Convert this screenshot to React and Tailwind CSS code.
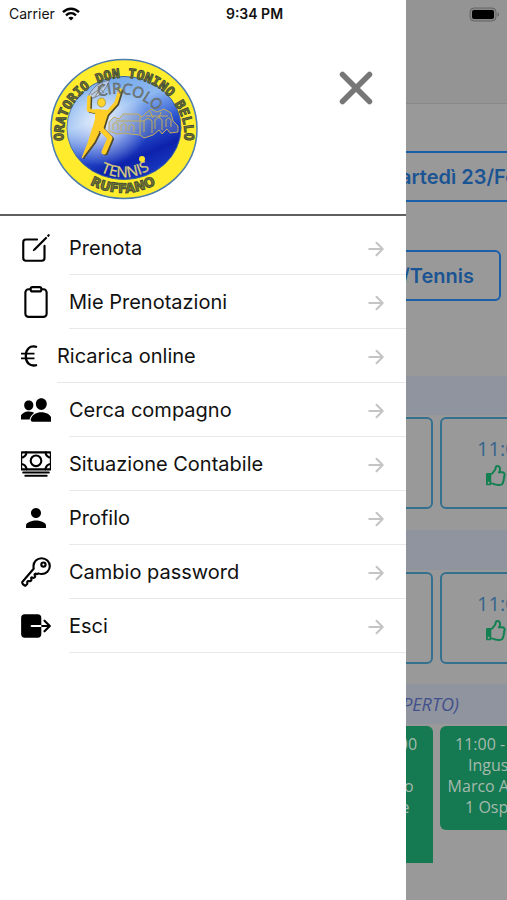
import React from 'react';
import {
  IoCreateOutline,
  IoClipboardOutline,
  IoPeople,
  IoCashOutline,
  IoKeyOutline,
  IoExit,
  IoArrowForward,
} from 'react-icons/io5';
import { MdPerson } from 'react-icons/md';
import { FaRegThumbsUp } from 'react-icons/fa';

const EuroIcon = ({ className }) => (
  <svg width="18" height="24" viewBox="0 0 18 24" fill="none" stroke="currentColor" strokeWidth="2.3" className={className}>
    <path d="M16 3C8.500 .800 4.800 5.500 4.800 12S8.500 23 16 21" />
    <path d="M0 9.700h13.500M0 14.300h13.500" strokeWidth="1.800" />
  </svg>
);

const menuItems = [
  { label: 'Prenota', Icon: IoCreateOutline, size: 34 },
  { label: 'Mie Prenotazioni', Icon: IoClipboardOutline, size: 34 },
  { label: 'Ricarica online', Icon: EuroIcon, narrow: true },
  { label: 'Cerca compagno', Icon: IoPeople, size: 34 },
  { label: 'Situazione Contabile', Icon: IoCashOutline, size: 34 },
  { label: 'Profilo', Icon: MdPerson, size: 30 },
  { label: 'Cambio password', Icon: IoKeyOutline, size: 34 },
  { label: 'Esci', Icon: IoExit, size: 34 },
];

const StatusBar = () => (
  <div className="absolute inset-x-0 top-0 z-10 grid h-7 grid-cols-3 items-center pl-[9px] pr-[7px] text-sm text-[#111]">
    <div className="flex items-center gap-[7px]">
      <span>Carrier</span>
      <svg width="18" height="14" viewBox="0 0 18 14" fill="none" stroke="#000" strokeWidth="2.4">
        <path d="M1 5.2C5.6 .6 12.4 .6 17 5.2" />
        <path d="M4 8.4c2.9-2.8 7.1-2.8 10 0" />
        <path d="M6.4 10.9c1.5-1.4 3.7-1.4 5.2 0L9 13.6z" fill="#000" stroke="none" />
      </svg>
    </div>
    <span className="text-center font-semibold">9:34 PM</span>
    <svg className="justify-self-end" width="31" height="15" viewBox="0 0 31 15">
      <rect x="1" y="1" width="26" height="13" rx="4" fill="#888" stroke="#666" />
      <rect x="3" y="3" width="22" height="9" rx="2" fill="#000" />
      <path d="M28.5 5.5c2 .6 2 3.400 0 4z" fill="#666" />
    </svg>
  </div>
);

const Logo = () => (
  <svg width="148" height="142" viewBox="0 0 148 142" role="img" aria-label="Circolo Tennis Ruffano">
    <defs>
      <linearGradient id="sky" x1="0.2" y1="0" x2="0.7" y2="1">
        <stop offset="0" stopColor="#6ea6ea" />
        <stop offset="0.35" stopColor="#8db8f0" />
        <stop offset="0.6" stopColor="#2c55d2" />
        <stop offset="0.8" stopColor="#0d22ac" />
        <stop offset="1" stopColor="#1a3cc4" />
      </linearGradient>
      <radialGradient id="glow" cx="0.3" cy="0.45" r="0.42">
        <stop offset="0" stopColor="#fff" stopOpacity="0.85" />
        <stop offset="1" stopColor="#fff" stopOpacity="0" />
      </radialGradient>
      <path id="ringTop" d="M15 90A60.500 57.500 0 1 1 133 90" />
      <path id="ringBottom" d="M25 115A66 63 0 0 0 121 115" />
      <path id="club" d="M41 43Q80 22 113 60" />
      <path id="sport" d="M40 108Q76 132 110 105" />
    </defs>
    <ellipse cx="74" cy="71" rx="73" ry="69.500" fill="#ffec2c" stroke="#4b7cae" strokeWidth="1.500" />
    <ellipse cx="74" cy="70" rx="57" ry="51.500" fill="url(#sky)" stroke="#3a64a0" />
    <ellipse cx="74" cy="70" rx="57" ry="51.500" fill="url(#glow)" />
    <g fill="#8d9ab0" fillOpacity="0.3" stroke="#c0ac5c" strokeWidth="1">
      <path d="M59 73v-9l5-5 5 2 4-5h15l4 3 4-4 5-4 6 3 7-3 7 4 2 8 5 5v6l-8 1-3-4-5 5-3-4-6 5-9 3-4-3-9-1-8-1-6 1z" />
      <path d="M63 72v-6q3-3 5 0v6M71 73v-6q3-3 5 0v6M79 73v-5q2-3 5 0v6M66 63h28M90 57v19M94 74V63q4-5 8 0v12M105 71V62q3-5 7 0v10M116 69v-7q3-4 5 0v7M96 58h22M100 53l3 7M111 54l-2 6" fill="none" />
    </g>
    <path d="M38 40c3-10 11-16 22-18l-5 9c-4 6-10 10-17 9z" fill="#c4cede" fillOpacity="0.7" stroke="#6b6f80" strokeWidth="0.800" />
    <path d="M41 37l13-9M45 39l8-14M48 28l6 7M40 40l-2 4" stroke="#746e58" strokeWidth="0.700" />
    {/* player: dark pass first, offset as a shadow, then the yellow body */}
    <g strokeLinecap="round" strokeLinejoin="round">
      <g transform="translate(1.500 1)" fill="#4f4a2c" stroke="#4f4a2c">
        <path d="M39 39L38.500 52 47 54M70 32l-4 13-9 10" fill="none" strokeWidth="3.500" />
        <path d="M46 52l12 1-3 9-3 10-9 0 3-11z" strokeWidth="2" />
        <path d="M51 71l9 9-6 14" fill="none" strokeWidth="5" />
        <path d="M43 70l6 4-5 10-12 16 6-15z" strokeWidth="1" />
      </g>
      <g fill="#ffce26" stroke="#ffce26">
        <path d="M39 39L38.500 52 47 54M70 32l-4 13-9 10" fill="none" strokeWidth="3.500" />
        <path d="M46 52l12 1-3 9-3 10-9 0 3-11z" strokeWidth="2" />
        <path d="M51 71l9 9-6 14" fill="none" strokeWidth="5" />
        <path d="M43 70l6 4-5 10-12 16 6-15z" strokeWidth="1" />
      </g>
    </g>
    <ellipse cx="51.500" cy="44.500" rx="4" ry="4.500" fill="#ffd42c" stroke="#927a28" strokeWidth="0.600" />
    <text fontFamily="DejaVu Sans Mono, monospace" fontWeight="700" fontSize="13" fill="#77782c" stroke="#3f4c3c" strokeWidth="0.900">
      <textPath href="#ringTop" startOffset="50%" textAnchor="middle">ORATORIO DON TONINO BELLO</textPath>
    </text>
    <text fontFamily="DejaVu Sans, sans-serif" fontWeight="700" fontSize="13" fill="#77782c" stroke="#3f4c3c" strokeWidth="0.900">
      <textPath href="#ringBottom" startOffset="50%" textAnchor="middle">RUFFANO</textPath>
    </text>
    <g fontFamily="Open Sans, sans-serif" fontSize="15">
      <text fill="#8d8f76" stroke="#4e5866" strokeWidth="0.500">
        <textPath href="#club" startOffset="50%" textAnchor="middle">CIRCOLO</textPath>
      </text>
      <text fill="#efe48a" stroke="#b5aa66" strokeWidth="0.400">
        <textPath href="#sport" startOffset="50%" textAnchor="middle">TENNIS</textPath>
      </text>
    </g>
    <circle cx="92" cy="101" r="3" fill="#ffe22c" />
  </svg>
);

const MenuRow = ({ label, Icon, size, narrow }) => (
  <li>
    <a href="#" className="flex items-center gap-[18px] pl-[21px] text-xl text-[#111]">
      <span className={`flex shrink-0 justify-center overflow-hidden text-black ${narrow ? 'w-[18px]' : 'w-[30px]'}`}>
        <Icon size={size} className="shrink-0" />
      </span>
      <span className="flex h-[54px] flex-1 items-center justify-between border-b border-[#e8e8e8] pt-px pr-[19px]">
        {label}
        <IoArrowForward size={22} className="mt-[2px] text-[#c4c4c4]" />
      </span>
    </a>
  </li>
);

const FreeSlot = ({ time }) => (
  <button className="flex h-[92px] w-[126px] shrink-0 flex-col items-center justify-center gap-1 rounded-md border-2 border-[#35708f] pb-1 text-xl text-[#35658c]">
    <span className="leading-6">{time}</span>
    {time && <FaRegThumbsUp size={21} className="mr-3 text-[#128050]" />}
  </button>
);

const SlotRow = () => (
  <div className="-ml-[99px] flex w-max gap-[7px]">
    <FreeSlot />
    <FreeSlot time="11:00" />
  </div>
);

const BookingPage = () => (
  <main className="min-w-0 flex-1 overflow-hidden bg-[#999] font-['Open_Sans',sans-serif]">
    <div className="h-[104px] border-b border-[#888] bg-[#949494]" />
    <div className="flex flex-col gap-12 pt-[47px] font-['Inter',sans-serif] text-xl font-semibold text-[#1b5493]">
      <button className="-ml-7 h-[51px] w-max border-y-2 border-[#1b5ea8] pl-1 whitespace-nowrap">Martedì 23/Feb</button>
      <button className="mr-[6px] flex h-[51px] items-center justify-end rounded-r-md border-2 border-l-0 border-[#1b5ea8] pr-[25px] whitespace-nowrap">
        y/Tennis
      </button>
    </div>
    <div className="mt-[75px] mb-[2px] h-[39px] bg-[#8f949f]" />
    <SlotRow />
    <div className="mt-[21px] mb-[2px] h-10 bg-[#8f949f]" />
    <SlotRow />
    <div className="mt-5 mb-[2px] flex h-10 items-center justify-end bg-[#8f949f] pr-12 text-lg text-[#43508c] italic">
      (COPERTO)
    </div>
    <div className="-ml-[99px] flex w-max items-start gap-[7px] text-center text-base leading-[21px] text-[#a5b9ae]">
      <div className="h-[137px] w-[126px] rounded-t-md bg-[#157a51] pt-2">
        <p>10:00 - 11:00</p>
        <p className="h-[21px]" />
        <p>Marco Bello</p>
        <p>con Ospite</p>
      </div>
      <div className="h-[104px] w-[126px] rounded-md bg-[#157a51] pt-2">
        <p>11:00 - 12:00</p>
        <p>Ingusci S.</p>
        <p className="whitespace-nowrap">Marco Antonio</p>
        <p>1 Ospite e</p>
      </div>
    </div>
  </main>
);

const App = () => {
  return (
    <div className="relative flex min-h-screen bg-white font-['Inter',sans-serif]">
      <StatusBar />
      <aside className="w-4/5 shrink-0 bg-white">
        <header className="flex items-start justify-between border-b-2 border-[#606060] pt-[58px] pr-8 pb-[14px] pl-[50px]">
          <Logo />
          <button aria-label="Chiudi" className="mt-3">
            <svg width="36" height="36" viewBox="0 0 36 36" stroke="#777" strokeWidth="5.500" strokeLinecap="round">
              <path d="M4.500 4.500l27 27M31.500 4.500l-27 27" />
            </svg>
          </button>
        </header>
        <ul className="pt-[5px]">
          {menuItems.map(item => <MenuRow key={item.label} {...item} />)}
        </ul>
      </aside>
      <BookingPage />
    </div>
  );
};

export default App;
